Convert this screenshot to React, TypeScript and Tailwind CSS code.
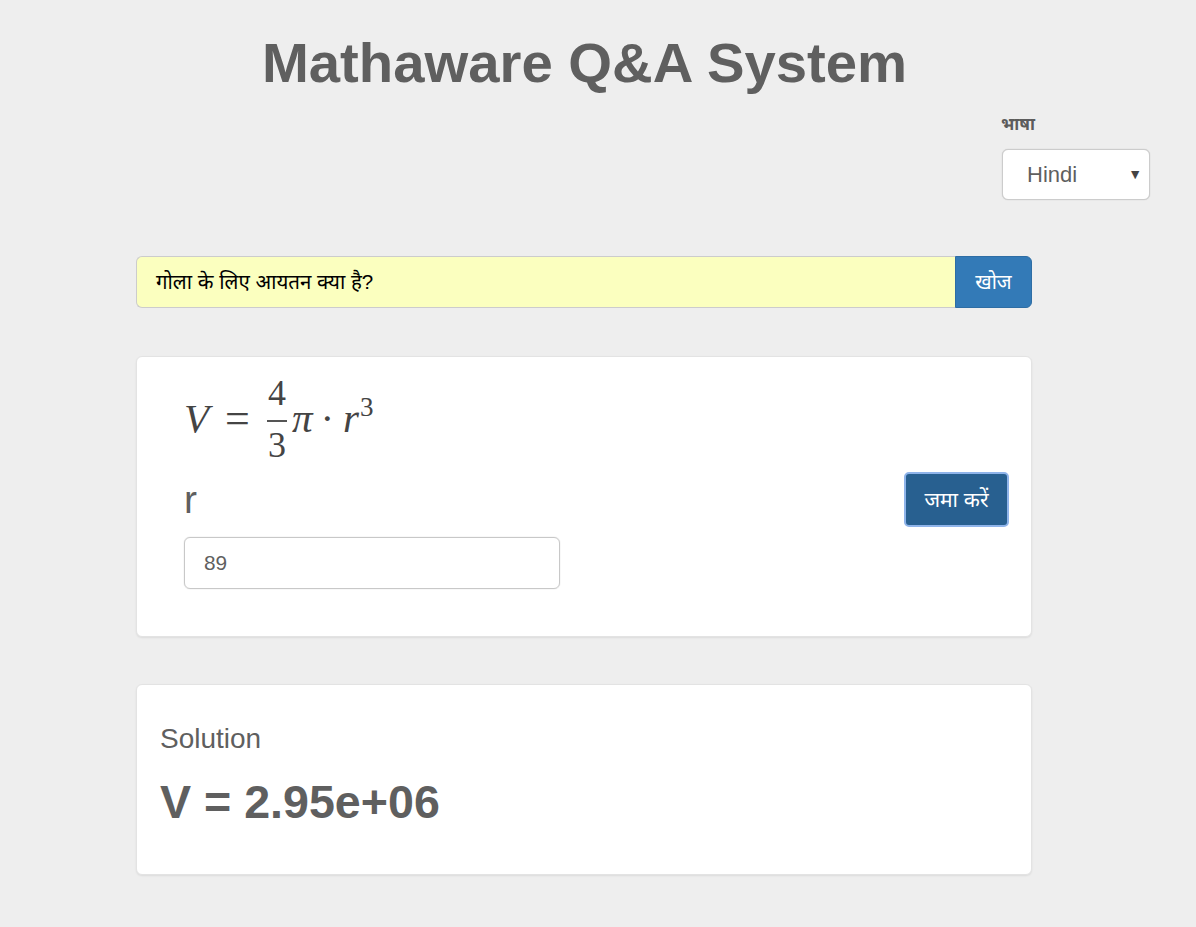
const sans = "font-['Liberation_Sans','Noto_Sans',sans-serif]";

function Formula() {
  return (
    <div className="flex items-center h-[86px] text-[#444] font-['Liberation_Serif',serif] text-[41px] leading-none">
      <span className="italic mb-[8px]">V</span>
      <span className="ml-[16px] mr-[17px] mb-[6px] text-[44px]">=</span>
      <span className="flex flex-col items-center w-[20px] text-[36px]">
        <span className="leading-[29px] pb-[12px]">4</span>
        <span className="w-[20px] h-[2px] bg-[#555]" />
        <span className="leading-[39px] pt-[4px]">3</span>
      </span>
      <span className="italic ml-[5px] mb-[8px]">π</span>
      <span className="ml-[8px] mr-[9px] mb-[8px]">·</span>
      <span className="italic mb-[8px]">r</span>
      <span className="text-[27px] mb-[30px] ml-[1px]">3</span>
    </div>
  );
}

export default function App() {
  return (
    <div className={`${sans} w-[1196px] h-[927px] overflow-hidden bg-[#eeeeee] text-[#5f5f5f]`}>
      <h1 className="pt-[28px] pr-[27px] text-center text-[56.25px] font-bold leading-[70px] text-[#5f5f5f]">
        Mathaware Q&amp;A System
      </h1>

      <div className="flex justify-end pr-[45px] mt-[14px]">
        <div className="w-[150px]">
          <div className="text-[17px] font-bold leading-[26px] text-[#5c5c5c]">भाषा</div>
          <div className="ml-[1px] mt-[11px] flex items-center justify-between h-[51px] w-[148px] rounded-[6px] border border-[#cccccc] bg-white pl-[24px] pr-[7px] text-[22px] shadow-[0_0_1px_#bbbbbb]">
            <span>Hindi</span>
            <span className="text-[14px] text-[#444]">▼</span>
          </div>
        </div>
      </div>

      <div className="ml-[136px] w-[896px]">
        <div className="mt-[56px] flex h-[52px]">
          <div className="flex flex-1 items-center rounded-l-[6px] border border-r-0 border-[#cccccc] bg-[#fbffbf] pl-[19px] text-[20.5px] text-black">
            गोला के लिए आयतन क्या है?
          </div>
          <button className="w-[77px] rounded-r-[6px] border border-[#2e6da4] bg-[#337ab7] text-[20px] text-white">खोज</button>
        </div>

        <div className="mt-[48px] flex h-[281px] items-start justify-between rounded-[6px] border border-[#e3e3e3] bg-white pl-[47px] pr-[22px] shadow-[0_1px_2px_rgba(0,0,0,0.08)]">
          <div className="w-[376px] pt-[22px]">
            <Formula />
            <div className="mt-[12px] text-[39px] leading-[46px]">r</div>
            <div className="mt-[14px] flex h-[52px] items-center rounded-[6px] border border-[#c8c8c8] pl-[19px] text-[20.8px] shadow-[0_0_1px_#bbbbbb]">
              89
            </div>
          </div>
          <button className="mt-[115px] h-[55px] w-[105px] rounded-[5px] border-2 border-[#8fb4ea] bg-[#286090] text-[21px] text-white">
            जमा करें
          </button>
        </div>

        <div className="mt-[47px] h-[191px] rounded-[6px] border border-[#e3e3e3] bg-white pl-[23px] pt-[34px] shadow-[0_1px_2px_rgba(0,0,0,0.08)]">
          <div className="text-[28px] leading-[40px]">Solution</div>
          <div className="mt-[16px] text-[46.6px] font-bold leading-[54px]">V = 2.95e+06</div>
        </div>
      </div>
    </div>
  );
}
